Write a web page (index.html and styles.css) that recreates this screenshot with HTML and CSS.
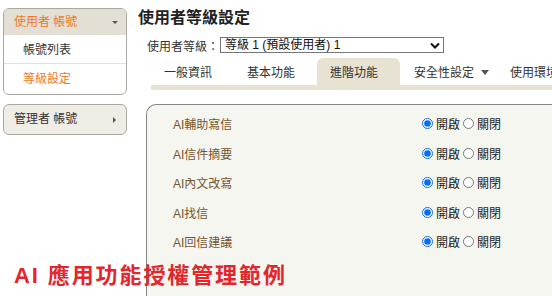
FILE: index.html
```html
<!DOCTYPE html>
<html lang="zh-Hant">
<head>
    <meta charset="UTF-8">
    <meta name="viewport" content="width=device-width, initial-scale=1.0">
    <title>使用者等級設定</title>
    <link rel="stylesheet" href="styles.css">
</head>
<body>
    <div class="layout">
        <aside class="sidebar">
            <div class="menu">
                <div class="menu-head open">使用者 帳號<span class="caret-down"></span></div>
                <a class="menu-item">帳號列表</a>
                <a class="menu-item active">等級設定</a>
            </div>
            <div class="menu closed">
                <div class="menu-head">管理者 帳號<span class="caret-right"></span></div>
            </div>
        </aside>
        <main class="content">
            <h1>使用者等級設定</h1>
            <div class="level-row">
                <label for="level">使用者等級：</label>
                <div class="select-wrap">
                    <select id="level">
                        <option>等級 1 (預設使用者) 1</option>
                    </select>
                    <svg class="chevron" width="10" height="7" viewBox="0 0 10 7"><path d="M1 1.5 L5 5.5 L9 1.5" fill="none" stroke="#111" stroke-width="2"/></svg>
                </div>
            </div>
            <ul class="tabs">
                <li>一般資訊</li>
                <li>基本功能</li>
                <li class="active">進階功能</li>
                <li class="has-menu">安全性設定<span class="tab-caret"></span></li>
                <li>使用環境</li>
            </ul>
            <div class="panel">
                <div class="row">
                    <span class="name">AI輔助寫信</span>
                    <span class="opts"><label><input type="radio" name="r1" checked>開啟</label><label><input type="radio" name="r1">關閉</label></span>
                </div>
                <div class="row">
                    <span class="name">AI信件摘要</span>
                    <span class="opts"><label><input type="radio" name="r2" checked>開啟</label><label><input type="radio" name="r2">關閉</label></span>
                </div>
                <div class="row">
                    <span class="name">AI內文改寫</span>
                    <span class="opts"><label><input type="radio" name="r3" checked>開啟</label><label><input type="radio" name="r3">關閉</label></span>
                </div>
                <div class="row">
                    <span class="name">AI找信</span>
                    <span class="opts"><label><input type="radio" name="r4" checked>開啟</label><label><input type="radio" name="r4">關閉</label></span>
                </div>
                <div class="row">
                    <span class="name">AI回信建議</span>
                    <span class="opts"><label><input type="radio" name="r5" checked>開啟</label><label><input type="radio" name="r5">關閉</label></span>
                </div>
            </div>
        </main>
    </div>
    <div class="watermark">AI 應用功能授權管理範例</div>
</body>
</html>
```

FILE: styles.css
```css
html, body {
    margin: 0;
    padding: 0;
}

body {
    font-family: "Liberation Sans", "Noto Sans CJK TC", sans-serif;
    font-size: 12px;
    color: #333;
    background-color: #fff;
    width: 552px;
    height: 296px;
    overflow: hidden;
    position: relative;
}

.layout {
    display: flex;
    align-items: flex-start;
}

/* sidebar */
.sidebar {
    width: 124px;
    margin: 8px 0 0 3px;
    flex-shrink: 0;
}

.menu {
    border: 1px solid #a9a9a3;
    border-radius: 6px;
    overflow: hidden;
    background-color: #fff;
    margin-bottom: 9px;
    padding-bottom: 2px;
}

.menu.closed {
    background-color: #efede6;
    padding-bottom: 0;
}

.menu-head {
    height: 29px;
    line-height: 29px;
    padding-left: 10px;
    position: relative;
    color: #333;
}

.menu-head.open {
    background-color: #e3dfd4;
    color: #f07a22;
    height: 26px;
    line-height: 27px;
}

.caret-down {
    position: absolute;
    right: 8px;
    top: 12px;
    border-left: 3px solid transparent;
    border-right: 3px solid transparent;
    border-top: 3px solid #555;
}

.caret-right {
    position: absolute;
    right: 10px;
    top: 12px;
    border-top: 3px solid transparent;
    border-bottom: 3px solid transparent;
    border-left: 3px solid #555;
}

.menu-item {
    display: block;
    height: 28px;
    line-height: 30px;
    padding-left: 19px;
    color: #333;
    border-bottom: 1px solid #e2e0da;
}

.menu-item.active {
    color: #f07a22;
    border-bottom: none;
}

/* content */
.content {
    margin-left: 11px;
    width: 420px;
    flex-shrink: 0;
}

h1 {
    font-size: 16px;
    font-weight: bold;
    color: #222;
    margin: 8px 0 0 0;
    line-height: 20px;
}

.level-row {
    display: flex;
    align-items: center;
    margin: 9px 0 0 9px;
    height: 16px;
}

.level-row label {
    color: #333;
    margin-right: 1px;
}

.select-wrap {
    position: relative;
}

.select-wrap select {
    appearance: none;
    width: 224px;
    height: 16px;
    border: 1px solid #777;
    border-radius: 0;
    padding: 0 0 0 4px;
    font-family: "Liberation Sans", "Noto Sans CJK TC", sans-serif;
    font-size: 12px;
    line-height: 14px;
    color: #111;
    background-color: #fff;
}

.chevron {
    position: absolute;
    right: 4px;
    top: 5px;
}

.tabs {
    list-style: none;
    display: flex;
    margin: 5px 0 0 13px;
    padding: 0;
    width: 440px;
    border-bottom: 5px solid #e8e2d2;
}

.tabs li {
    flex-shrink: 0;
    min-width: 83px;
    box-sizing: border-box;
    height: 27px;
    line-height: 30px;
    padding: 0 12px 0 13px;
    color: #333;
    white-space: nowrap;
}

.tabs li.active {
    background-color: #e8e2d2;
    border-radius: 6px 6px 0 0;
}

.tabs li.has-menu {
    padding-left: 14px;
    padding-right: 8px;
}

.tab-caret {
    display: inline-block;
    vertical-align: 2px;
    margin-left: 7px;
    border-left: 4px solid transparent;
    border-right: 4px solid transparent;
    border-top: 5px solid #555;
}

.panel {
    margin: 14px 0 0 8px;
    width: 460px;
    height: 200px;
    background-color: #f6f6f1;
    border-top: 1px solid #858585;
    border-left: 1px solid #858585;
    border-top-left-radius: 10px;
    padding-top: 4px;
}

.row {
    display: flex;
    align-items: center;
    height: 29.5px;
    padding-left: 26px;
}

.name {
    width: 249px;
    color: #74552f;
}

.opts {
    display: flex;
    align-items: center;
    color: #222;
}

.opts label {
    display: flex;
    align-items: center;
    margin-right: 3px;
}

.opts input {
    width: 11px;
    height: 11px;
    margin: 0 3px 0 0;
    accent-color: #0a6cf0;
}

.watermark {
    position: absolute;
    left: 14px;
    top: 257px;
    font-size: 22px;
    font-weight: bold;
    letter-spacing: 1.9px;
    color: #e3262c;
    white-space: nowrap;
}
```
